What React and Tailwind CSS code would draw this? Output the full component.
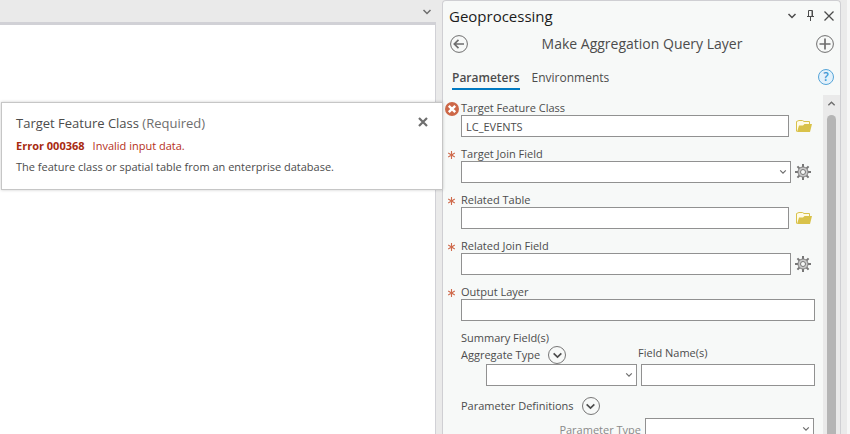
import React from "react";

const stroke = {
  fill: "none",
  stroke: "currentColor",
  strokeLinecap: "butt",
};

function Chevron({ className = "", up = false }) {
  return (
    <svg viewBox="0 0 10 10" className={className} aria-hidden="true" {...stroke} strokeWidth="1.5">
      <path d={up ? "M1.5 7 5 3.5 8.5 7" : "M1.5 3 5 6.5 8.5 3"} />
    </svg>
  );
}

function FolderIcon() {
  return (
    <svg width="16" height="12" viewBox="0 0 16 12" aria-hidden="true">
      <path d="M.5 11.5V1.5L3 .5H6.5L8 1.5H13.5V4" fill="#fffbe6" stroke="#d9c24a" />
      <path d="M1 12 3 5.5H7L8.5 4H16L14 12Z" fill="#d9c24a" />
    </svg>
  );
}

function GearIcon() {
  return (
    <svg width="16" height="16" viewBox="0 0 16 16" aria-hidden="true">
      <g stroke="#777" strokeWidth="2">
        <path d="M8 0V3M8 13V16M0 8H3M13 8H16M2.4 2.4 4.5 4.5M11.5 11.5 13.6 13.6M2.4 13.6 4.5 11.5M11.5 4.5 13.6 2.4" />
      </g>
      <circle cx="8" cy="8" r="5" fill="#c9c9c9" stroke="#808080" />
      <circle cx="8" cy="8" r="2.5" fill="#f7f9f8" stroke="#777" />
    </svg>
  );
}

function ErrorIcon() {
  return (
    <svg width="14" height="14" viewBox="0 0 14 14" role="img" aria-label="Error">
      <circle cx="7" cy="7" r="7" fill="#cd6848" />
      <path d="M3.8 3.8 10.2 10.2M10.2 3.8 3.8 10.2" stroke="#fff" strokeWidth="2.4" />
    </svg>
  );
}

function RequiredIcon() {
  return (
    <svg width="8" height="8" viewBox="0 0 8 8" role="img" aria-label="Required">
      <path d="M3.5 0V8M.2 2 6.8 6M6.8 2 .2 6" stroke="#cf6a4c" strokeWidth="1.1" />
    </svg>
  );
}

function ExpandButton({ label }) {
  return (
    <button type="button" aria-label={label} className="flex size-[18px] items-center justify-center rounded-full border border-[#777] text-[#4c4c4c]">
      <Chevron className="size-[11px]" />
    </button>
  );
}

const box = "block h-[22px] w-full min-w-0 rounded-none border border-[#919191] bg-white px-1 text-[11px] leading-5 text-[#4c4c4c] outline-none";

function Select({ id }) {
  return (
    <div className="relative min-w-0 flex-1">
      <select id={id} className={box + " appearance-none"} />
      <Chevron className="pointer-events-none absolute right-1 top-[7px] size-2 text-[#6e6e6e]" />
    </div>
  );
}

function Field({ id, label, marker, value, select, action }) {
  return (
    <div className="flex">
      <div className="flex h-5 w-[18px] shrink-0 items-center justify-center">
        {marker === "error" ? <ErrorIcon /> : <RequiredIcon />}
      </div>
      <div className="min-w-0 flex-1">
        <label htmlFor={id} className="block h-4 text-[11px] leading-[18px]">{label}</label>
        <div className="flex items-center">
          {select ? <Select id={id} /> : <input id={id} type="text" defaultValue={value} className={box} />}
          {action === "browse" && (
            <button type="button" aria-label={"Browse for " + label} className="ml-[7px] flex w-[19px] shrink-0">
              <FolderIcon />
            </button>
          )}
          {action === "options" && (
            <button type="button" aria-label={label + " options"} className="ml-1 flex w-5 shrink-0">
              <GearIcon />
            </button>
          )}
        </div>
      </div>
    </div>
  );
}

function MapView() {
  return (
    <section className="relative z-10 flex min-w-0 flex-col bg-[#eaeaea] pr-[6px]">
      <div className="flex h-[22px] shrink-0 items-center justify-end pr-1">
        <button type="button" aria-label="View list" className="mt-[2px] text-[#6e6e6e]">
          <Chevron className="size-[10px]" />
        </button>
      </div>
      <div className="flex-1 border-r border-t-3 border-[#d1d1d6] bg-white" />
      <div role="alert" className="absolute -right-px left-px top-[102px] flex items-start justify-between border border-[#c6c6c6] bg-white px-[14px] pb-3 pt-[10px] text-[#4c4c4c] shadow-[0_0_3px_rgba(0,0,0,0.2)]">
        <div>
          <h2 className="text-[13px] font-medium leading-5">
            Target Feature Class <span className="font-normal text-[#6e6e6e]">(Required)</span>
          </h2>
          <p className="mt-[3px] text-[11px] leading-5 text-[#b5301a]">
            <strong className="mr-2 font-bold text-[#a82a10]">Error 000368</strong>Invalid input data.
          </p>
          <p className="mt-px text-[11px] leading-5">The feature class or spatial table from an enterprise database.</p>
        </div>
        <button type="button" aria-label="Close message" className="mt-1 text-[#6e6e6e]">
          <svg width="10" height="10" viewBox="0 0 10 10" {...stroke} strokeWidth="2.2"><path d="M1 1 9 9M9 1 1 9" /></svg>
        </button>
      </div>
    </section>
  );
}

function GeoprocessingPane() {
  return (
    <aside className="flex min-w-0 flex-col overflow-hidden rounded-t-sm border-x border-t border-[#cfcfd3] bg-[#f7f9f8] text-[#4c4c4c]">
      <header className="flex h-7 shrink-0 items-center justify-between px-[6px] pt-[2px]">
        <h1 className="text-[15px] leading-6 text-[#1c1c1c]">Geoprocessing</h1>
        <div className="flex items-center gap-[10px] pb-px">
          <button type="button" aria-label="Pane menu"><Chevron className="size-[10px]" /></button>
          <button type="button" aria-label="Auto hide">
            <svg width="7" height="11" viewBox="0 0 7 11" {...stroke}>
              <path d="M1.5 6V.5H5.5V6M0 6.5H7M3.5 6.5V11" />
              <path d="M5 1V6" />
            </svg>
          </button>
          <button type="button" aria-label="Close pane">
            <svg width="10" height="10" viewBox="0 0 10 10" {...stroke} strokeWidth="1.3"><path d="M.5 .5 9.5 9.5M9.5 .5 .5 9.5" /></svg>
          </button>
        </div>
      </header>
      <div className="flex h-[30px] shrink-0 items-center justify-between pl-[6px] pr-[5px]">
        <button type="button" aria-label="Back">
          <svg width="20" height="20" viewBox="0 0 20 20" {...stroke} className="text-[#6e6e6e]">
            <circle cx="10" cy="10" r="8.4" />
            <path d="M5.5 10H15M9.5 5.8 5.3 10 9.5 14.2" strokeWidth="1.7" />
          </svg>
        </button>
        <h2 className="text-[14px] leading-6">Make Aggregation Query Layer</h2>
        <button type="button" aria-label="Add">
          <svg width="20" height="20" viewBox="0 0 20 20" {...stroke} className="text-[#6e6e6e]">
            <circle cx="10" cy="10" r="8.4" />
            <path d="M10 4.5V15.5M4.5 10H15.5" strokeWidth="1.7" />
          </svg>
        </button>
      </div>
      <div className="flex h-9 shrink-0 items-center justify-between pl-[9px] pr-[6px]">
        <nav className="flex gap-3 text-[12px]">
          <button type="button" aria-current="page" className="border-b-2 border-[#0079c1] pt-[2px] font-semibold leading-[21px]">Parameters</button>
          <button type="button" className="border-b-2 border-transparent pt-[2px] leading-[21px]">Environments</button>
        </nav>
        <button type="button" aria-label="Help" className="flex size-4 items-center justify-center rounded-full border border-[#56a5d8] bg-[#e3f1fb] text-[12px] font-semibold leading-none text-[#3d97d3]">?</button>
      </div>
      <div className="flex min-h-0 flex-1">
        <form className="flex min-w-0 flex-1 flex-col gap-2 overflow-hidden pr-2 pt-1">
          <Field id="target" label="Target Feature Class" marker="error" value="LC_EVENTS" action="browse" />
          <Field id="target-join" label="Target Join Field" marker="required" select action="options" />
          <Field id="related" label="Related Table" marker="required" action="browse" />
          <Field id="related-join" label="Related Join Field" marker="required" action="options" />
          <Field id="output" label="Output Layer" marker="required" />
          <fieldset aria-labelledby="summary-heading" className="pl-[18px] pt-[1px]">
            <div className="flex">
              <div className="w-[177px] text-[11px] leading-4">
                <div id="summary-heading">Summary Field(s)</div>
                <div className="flex h-[18px] items-center gap-2">
                  <label htmlFor="aggregate">Aggregate Type</label>
                  <ExpandButton label="Expand summary fields" />
                </div>
              </div>
              <label htmlFor="field-name" className="pt-[15px] text-[11px] leading-4">Field Name(s)</label>
            </div>
            <div className="flex gap-1 pl-[25px]">
              <div className="flex w-[151px] shrink-0"><Select id="aggregate" /></div>
              <input id="field-name" type="text" className={box} />
            </div>
          </fieldset>
          <fieldset aria-labelledby="definitions-heading" className="pl-[18px]">
            <div className="flex h-6 items-center gap-2 text-[11px]">
              <span id="definitions-heading">Parameter Definitions</span>
              <ExpandButton label="Expand parameter definitions" />
            </div>
            <div className="flex pr-px">
              <label htmlFor="parameter-type" className="w-[184px] shrink-0 pr-1 text-right text-[11px] leading-6 text-[#8a8a8a]">Parameter Type</label>
              <Select id="parameter-type" />
            </div>
          </fieldset>
        </form>
        <div className="flex w-[17px] shrink-0 flex-col items-center bg-[#eaeaea] text-[#6e6e6e]">
          <button type="button" aria-label="Scroll up" className="flex h-5 items-center pb-1">
            <Chevron up className="size-[9px]" />
          </button>
          <div className="w-[9px] flex-1 rounded-t-full bg-[#b5b5b5]" />
        </div>
      </div>
    </aside>
  );
}

export default function App() {
  return (
    <main className="grid h-screen grid-cols-[minmax(0,1fr)_399px_9px] overflow-hidden bg-[#eaeaea] font-['Open_Sans','Noto_Sans',sans-serif]">
      <MapView />
      <GeoprocessingPane />
      <div className="border-r-3 border-[#f7f7f7]" />
    </main>
  );
}
